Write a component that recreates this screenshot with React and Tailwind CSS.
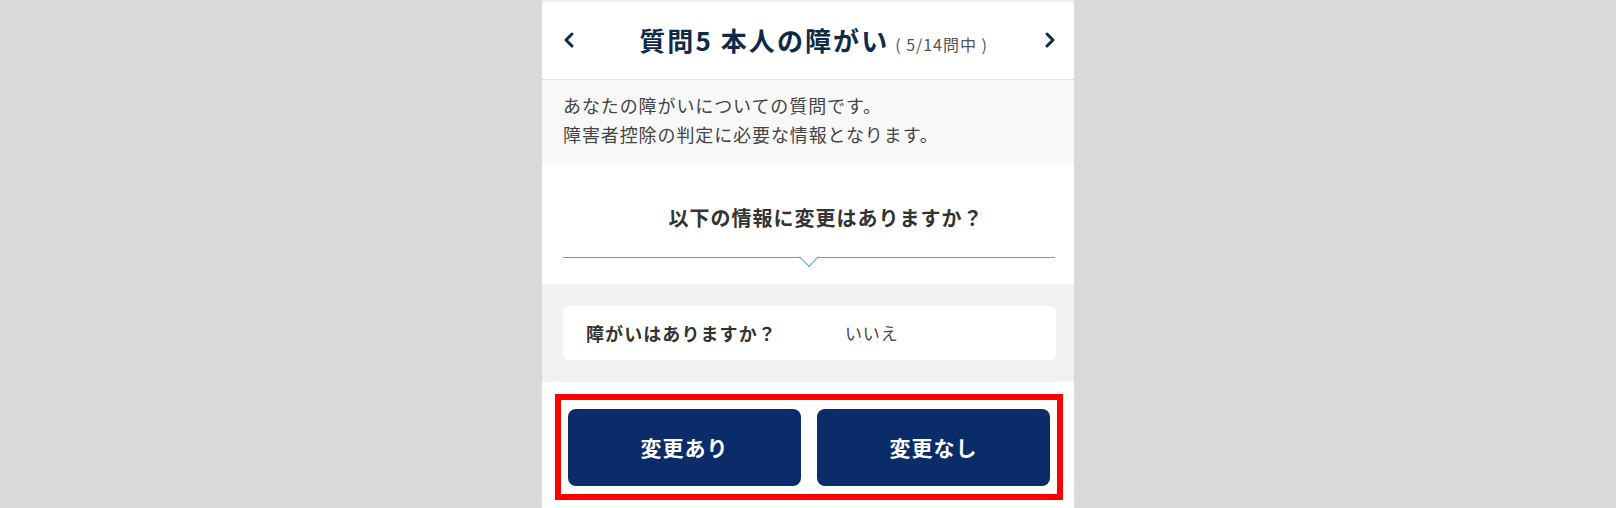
import { ChevronLeft, ChevronRight } from 'lucide-react'

const font = { fontFamily: '"Noto Sans CJK JP", "Noto Sans", sans-serif' }

function Header() {
  return (
    <div className="flex h-[80px] items-center justify-between border-b border-[#e3e3e3] pl-[15px] pr-[12px] shadow-[inset_0_4px_3px_-2px_rgba(0,0,0,0.08)]">
      <ChevronLeft className="h-[24px] w-[24px] text-[#0f2a47]" strokeWidth={3} />
      <div className="flex items-baseline pl-[8px]">
        <h1 className="text-[26px] font-bold tracking-[0.08em] text-[#0f2a47]">質問5 本人の障がい</h1>
        <span className="ml-[6px] text-[16px] tracking-[0.06em] text-[#555]">( 5/14問中 )</span>
      </div>
      <ChevronRight className="h-[24px] w-[24px] text-[#0f2a47]" strokeWidth={3} />
    </div>
  )
}

export default function App() {
  return (
    <div className="flex min-h-[508px] justify-center bg-[#d9d9d9]" style={font}>
      <div className="w-[532px] bg-white">
        <Header />

        {/* description */}
        <div className="bg-[#f8f8f8] pb-[14px] pl-[21px] pr-[19px] pt-[11px] text-[18px] leading-[29px] tracking-[0.05em] text-[#444]">
          <p>あなたの障がいについての質問です。</p>
          <p>障害者控除の判定に必要な情報となります。</p>
        </div>

        {/* question */}
        <div className="pl-[21px] pr-[19px] pt-[40px]">
          <p className="pl-[34px] text-center text-[20px] font-bold leading-[30px] tracking-[0.05em] text-[#333]">
            以下の情報に変更はありますか？
          </p>
          <div className="relative mt-[24px] h-[27px] border-t-[1.5px] border-[#4ea3e3]">
            <span className="absolute left-1/2 top-[-8px] h-[14px] w-[14px] -translate-x-1/2 rotate-45 border-b-[1.5px] border-r-[1.5px] border-[#4ea3e3] bg-white" />
          </div>
        </div>

        {/* current answer */}
        <div className="bg-[#f2f2f2] pb-[22px] pl-[21px] pr-[18px] pt-[22px]">
          <div className="flex h-[54px] items-center rounded-[6px] bg-white pl-[23px]">
            <span className="w-[259px] text-[18px] font-bold tracking-[0.06em] text-[#333]">障がいはありますか？</span>
            <span className="text-[17px] tracking-[0.05em] text-[#444]">いいえ</span>
          </div>
        </div>

        {/* buttons */}
        <div className="pb-[22px] pl-[26px] pr-[24px] pt-[27px]">
          <div className="relative flex gap-[16px]">
            <button className="h-[77px] flex-1 rounded-[8px] bg-[#0a2d69] text-[21px] font-bold tracking-[0.05em] text-white">
              変更あり
            </button>
            <button className="h-[77px] flex-1 rounded-[8px] bg-[#0a2d69] text-[21px] font-bold tracking-[0.05em] text-white">
              変更なし
            </button>
            <div className="pointer-events-none absolute bottom-[-14px] left-[-13px] right-[-13px] top-[-15px] border-[6px] border-[#ff0000]" />
          </div>
        </div>
      </div>
    </div>
  )
}
